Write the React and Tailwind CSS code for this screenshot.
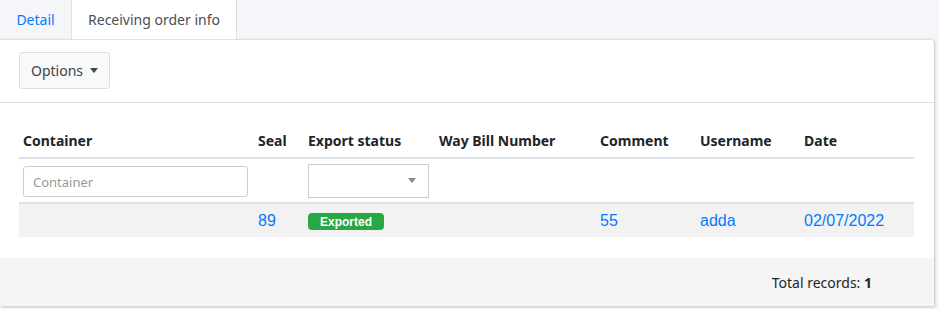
import { useState } from 'react';

const cols = [
  { key: 'container', label: 'Container', w: 'w-[235px]' },
  { key: 'seal', label: 'Seal', w: 'w-[50px]' },
  { key: 'status', label: 'Export status', w: 'w-[131px]' },
  { key: 'waybill', label: 'Way Bill Number', w: 'w-[161px]' },
  { key: 'comment', label: 'Comment', w: 'w-[100px]' },
  { key: 'user', label: 'Username', w: 'w-[104px]' },
  { key: 'date', label: 'Date', w: 'w-[114px]' },
];

const rows = [
  { id: 1, container: '', seal: '89', status: 'Exported', waybill: '', comment: '55', user: 'adda', date: '02/07/2022' },
];

const App = () => {
  const [filter, setFilter] = useState('');

  return (
    <div className="w-[939px] h-[309px] bg-[#f4f6f9] font-['Noto_Sans',sans-serif] text-[#212529] overflow-hidden">
      {/* tabs */}
      <div className="flex h-[39px] text-[14px]">
        <div className="w-[71px] flex items-center justify-center text-[#007bff]">Detail</div>
        <div className="w-[166px] flex items-center justify-center bg-white border-x border-[#dee2e6] text-[#495057]">
          Receiving order info
        </div>
      </div>

      {/* card */}
      <div className="w-[934px] h-[267px] bg-white border-t border-[#dee2e6] rounded-tr-[4px] shadow-[1px_1px_3px_rgba(0,0,0,0.2)] flex flex-col">
        <div className="h-[63px] px-[19px] pt-[12px] border-b border-[#dee2e6]">
          <button className="h-[37px] px-[11px] flex items-center gap-[7px] bg-[#f8f9fa] border border-[#ddd] rounded-[3px] text-[14px] text-[#444]">
            Options
            <span className="w-0 h-0 border-x-[4px] border-x-transparent border-t-[5px] border-t-[#444]" />
          </button>
        </div>

        <div className="px-[19px] pt-[21px] flex-1">
          <table className="w-[895px] table-fixed border-collapse">
            <thead>
              <tr className="h-[34px] border-b-2 border-[#dee2e6]">
                {cols.map(c => (
                  <th key={c.key} className={`${c.w} text-left font-bold text-[14px] px-[4px] align-middle`}>{c.label}</th>
                ))}
              </tr>
            </thead>
            <tbody>
              <tr className="h-[45px] border-b-2 border-[#dee2e6]">
                <td className="px-[4px]">
                  <input
                    value={filter}
                    onChange={e => setFilter(e.target.value)}
                    placeholder="Container"
                    className="w-[225px] h-[31px] mt-[2px] px-[9px] border border-[#ccc] rounded-[3px] text-[13px] placeholder:text-[#999] outline-none"
                  />
                </td>
                <td />
                <td className="px-[4px]">
                  <div className="w-[121px] h-[34px] border border-[#ccc] flex items-center justify-end pr-[12px]">
                    <span className="w-0 h-0 border-x-[4px] border-x-transparent border-t-[5px] border-t-[#888]" />
                  </div>
                </td>
                <td /><td /><td /><td />
              </tr>
              {rows.map(r => (
                <tr key={r.id} className="h-[34px] bg-[#f2f2f2] font-['Liberation_Sans',Arial,sans-serif] text-[16px] text-[#007bff]">
                  <td className="px-[4px]">{r.container}</td>
                  <td className="px-[4px]">{r.seal}</td>
                  <td className="px-[4px]">
                    <span className="inline-flex items-center h-[17px] px-[12px] rounded-[4px] bg-[#28a745] text-white text-[12px] font-bold leading-none">{r.status}</span>
                  </td>
                  <td className="px-[4px]">{r.waybill}</td>
                  <td className="px-[4px]">{r.comment}</td>
                  <td className="px-[4px]">{r.user}</td>
                  <td className="px-[4px]">{r.date}</td>
                </tr>
              ))}
            </tbody>
          </table>
        </div>

        <div className="h-[48px] bg-[#f5f5f5] flex items-center justify-end pr-[62px] text-[14px] text-[#212529]">
          Total records:&nbsp;<b>1</b>
        </div>
      </div>
    </div>
  );
};

export default App;
